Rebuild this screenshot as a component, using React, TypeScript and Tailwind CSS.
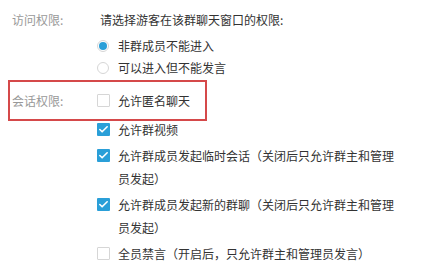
import { Check } from "lucide-react";

function Radio({ checked, label }: { checked?: boolean; label: string }) {
  return (
    <div className="flex h-[22px] items-center">
      <span className="flex h-[12px] w-[12px] items-center justify-center rounded-full border border-[#d6d6d6] bg-white">
        {checked && <span className="h-[8px] w-[8px] rounded-full bg-[#2a9fd8]" />}
      </span>
      <span className="ml-[9px] text-[#333]">{label}</span>
    </div>
  );
}

function Box({ checked, label }: { checked?: boolean; label: string }) {
  return (
    <div className="flex items-start">
      <span className="mt-[5px] flex h-[13px] w-[13px] shrink-0 items-center justify-center">
        {checked ? (
          <span className="flex h-[13px] w-[13px] items-center justify-center rounded-[1px] bg-[#2a9fd8]">
            <Check className="h-[11px] w-[11px] text-white" strokeWidth={3.5} />
          </span>
        ) : (
          <span className="h-[13px] w-[13px] rounded-[1px] border border-[#d6d6d6] bg-white" />
        )}
      </span>
      <span className="ml-[8px] max-w-[280px] leading-[23px] text-[#333]">{label}</span>
    </div>
  );
}

export default function App() {
  return (
    <div
      className="h-[269px] w-[444px] overflow-hidden bg-white pt-[9px] text-[12px] leading-[22px]"
      style={{ fontFamily: '"Noto Sans CJK SC", "Noto Sans", sans-serif' }}
    >
      <div className="flex">
        <div className="w-[97px] shrink-0 pl-[12px] text-[#999]">访问权限:</div>
        <div className="flex flex-col">
          <div className="pl-[3px] text-[#333]">请选择游客在该群聊天窗口的权限:</div>
          <div className="mt-[4px]">
            <Radio checked label="非群成员不能进入" />
            <Radio label="可以进入但不能发言" />
          </div>
        </div>
      </div>

      <div className="ml-[8px] mt-[1px] flex h-[41px] w-[199px] items-center border-2 border-[#d5494a]">
        <div className="w-[87px] shrink-0 pl-[2px] text-[#999]">会话权限:</div>
        <Box label="允许匿名聊天" />
      </div>

      <div className="-mt-[3px] ml-[97px] flex flex-col gap-[3px]">
        <Box checked label="允许群视频" />
        <Box checked label="允许群成员发起临时会话（关闭后只允许群主和管理员发起）" />
        <Box checked label="允许群成员发起新的群聊（关闭后只允许群主和管理员发起）" />
        <Box label="全员禁言（开启后，只允许群主和管理员发言）" />
      </div>
    </div>
  );
}
